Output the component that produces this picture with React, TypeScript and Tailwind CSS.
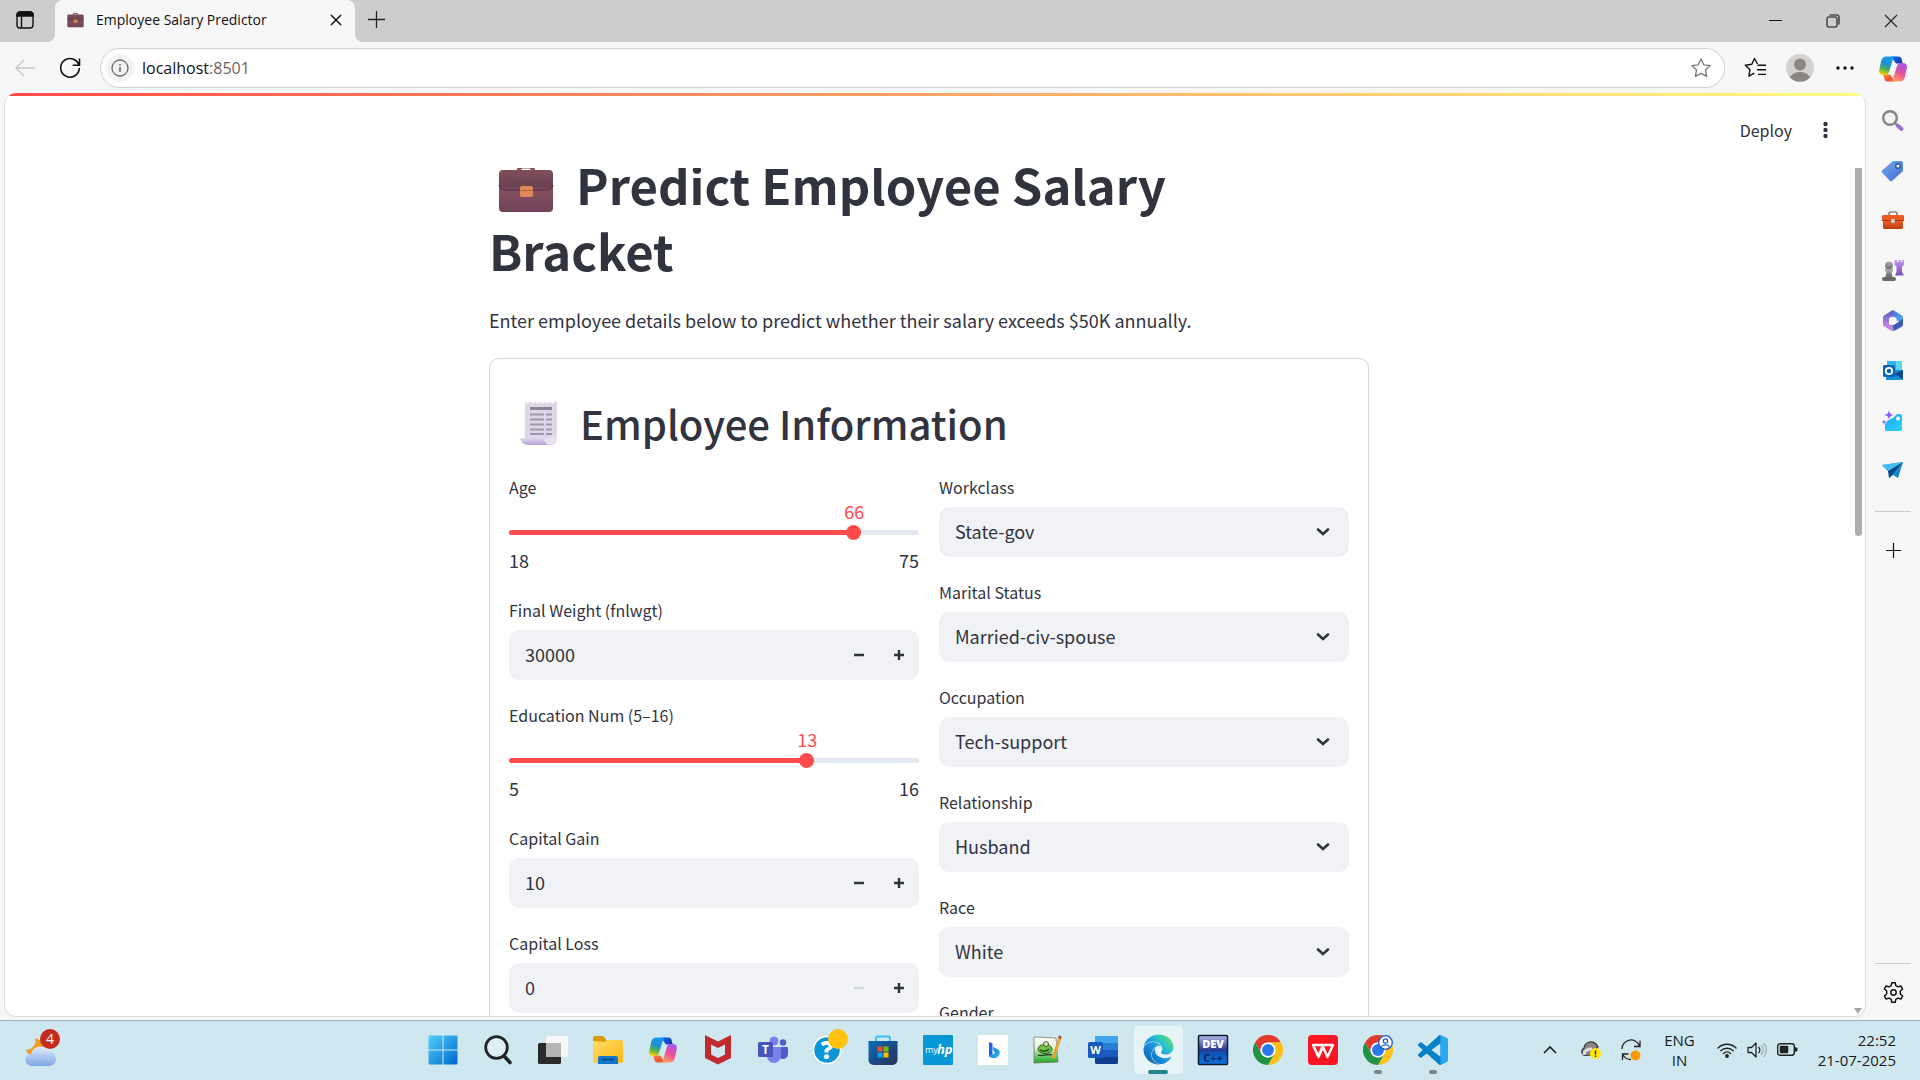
import { useState, type ReactNode } from 'react';
import { FaEdge } from 'react-icons/fa';

const ui = "font-['Open_Sans','Noto_Sans',sans-serif]";

/* ---------- colour icons ---------- */

function Gradients() {
  return (
    <svg width="0" height="0" className="absolute" aria-hidden="true">
      <defs>
        <linearGradient id="cpA" x1="0.6" y1="0" x2="0.3" y2="1">
          <stop offset="0" stopColor="#1b9cf0" />
          <stop offset="0.4" stopColor="#1a8fd8" />
          <stop offset="0.7" stopColor="#4fb057" />
          <stop offset="1" stopColor="#ffd000" />
        </linearGradient>
        <linearGradient id="cpB" x1="0.7" y1="0" x2="0.3" y2="1">
          <stop offset="0" stopColor="#a855e8" />
          <stop offset="0.5" stopColor="#ea4f9a" />
          <stop offset="1" stopColor="#ffa45c" />
        </linearGradient>
        <linearGradient id="cpC" x1="0" y1="0" x2="1" y2="1">
          <stop offset="0" stopColor="#0b6fe0" />
          <stop offset="1" stopColor="#1a2fae" />
        </linearGradient>
        <linearGradient id="cpD" x1="0" y1="0" x2="1" y2="1">
          <stop offset="0" stopColor="#ff7a3d" />
          <stop offset="1" stopColor="#e2433a" />
        </linearGradient>
        <linearGradient id="win" x1="0" y1="0" x2="1" y2="1">
          <stop offset="0" stopColor="#4fd0ff" />
          <stop offset="1" stopColor="#0067c9" />
        </linearGradient>
        <linearGradient id="case" x1="0" y1="0" x2="0" y2="1">
          <stop offset="0" stopColor="#80505a" />
          <stop offset="0.4" stopColor="#6a4250" />
          <stop offset="0.45" stopColor="#85505f" />
          <stop offset="1" stopColor="#70445a" />
        </linearGradient>
        <linearGradient id="edge" x1="0" y1="1" x2="1" y2="0.1">
          <stop offset="0" stopColor="#0b55a8" />
          <stop offset="0.45" stopColor="#1a8fdc" />
          <stop offset="0.7" stopColor="#2cc3cf" />
          <stop offset="1" stopColor="#6be04e" />
        </linearGradient>
        <linearGradient id="folder" x1="0" y1="0" x2="1" y2="1">
          <stop offset="0" stopColor="#ffdc6b" />
          <stop offset="1" stopColor="#fbb60f" />
        </linearGradient>
        <linearGradient id="store" x1="0" y1="0" x2="1" y2="1">
          <stop offset="0" stopColor="#0f6cb8" />
          <stop offset="1" stopColor="#263057" />
        </linearGradient>
        <linearGradient id="cloud" x1="0" y1="0" x2="0" y2="1">
          <stop offset="0" stopColor="#dfeafc" />
          <stop offset="1" stopColor="#7ea6e6" />
        </linearGradient>
        <linearGradient id="tag" x1="0" y1="0" x2="1" y2="1">
          <stop offset="0" stopColor="#6fa8f3" />
          <stop offset="1" stopColor="#426fcf" />
        </linearGradient>
        <linearGradient id="tool" x1="0" y1="0" x2="0" y2="1">
          <stop offset="0" stopColor="#f0692f" />
          <stop offset="1" stopColor="#bf3a0e" />
        </linearGradient>
        <linearGradient id="pawn" x1="0" y1="0" x2="0" y2="1">
          <stop offset="0" stopColor="#b0b0b0" />
          <stop offset="1" stopColor="#666" />
        </linearGradient>
        <linearGradient id="rook" x1="0" y1="0" x2="0" y2="1">
          <stop offset="0" stopColor="#c49af0" />
          <stop offset="1" stopColor="#7a4cb8" />
        </linearGradient>
        <linearGradient id="officeA" x1="0" y1="0" x2="1" y2="1">
          <stop offset="0" stopColor="#3f6fd0" />
          <stop offset="1" stopColor="#58b4f4" />
        </linearGradient>
        <linearGradient id="officeB" x1="0" y1="0" x2="0" y2="1">
          <stop offset="0" stopColor="#5b5fc7" />
          <stop offset="1" stopColor="#c58be0" />
        </linearGradient>
        <linearGradient id="plane" x1="0" y1="0" x2="1" y2="1">
          <stop offset="0" stopColor="#2aa8e8" />
          <stop offset="1" stopColor="#0f78c8" />
        </linearGradient>
        <linearGradient id="sky" x1="0" y1="0" x2="1" y2="1">
          <stop offset="0" stopColor="#17a8f5" />
          <stop offset="1" stopColor="#2fd2ff" />
        </linearGradient>
        <linearGradient id="bing" x1="0" y1="0" x2="1" y2="1">
          <stop offset="0" stopColor="#1e62e8" />
          <stop offset="1" stopColor="#28c8e8" />
        </linearGradient>
        <linearGradient id="paper" x1="0" y1="0" x2="0" y2="1">
          <stop offset="0" stopColor="#ffffff" />
          <stop offset="0.4" stopColor="#e3f3dc" />
          <stop offset="1" stopColor="#19a51c" />
        </linearGradient>
        <linearGradient id="dev" x1="0" y1="0" x2="0" y2="1">
          <stop offset="0" stopColor="#b4b8e4" />
          <stop offset="0.5" stopColor="#2a3796" />
          <stop offset="0.6" stopColor="#0c55b8" />
          <stop offset="1" stopColor="#1373e0" />
        </linearGradient>
        <linearGradient id="scroll" x1="0" y1="0" x2="0" y2="1">
          <stop offset="0" stopColor="#e2daec" />
          <stop offset="1" stopColor="#b79fd6" />
        </linearGradient>
      </defs>
    </svg>
  );
}

function Briefcase({ className }: { className: string }) {
  return (
    <svg viewBox="0 0 56 50" className={className} aria-hidden="true">
      <path d="M19 9V7a5 5 0 0 1 5-5h8a5 5 0 0 1 5 5v2h-4V7.500a2 2 0 0 0-2-2h-6a2 2 0 0 0-2 2V9z" fill="#8a5549" />
      <rect x="1" y="7" width="54" height="42" rx="4" fill="url(#case)" />
      <path d="M1 22c2 5 4 5 8 5h38c4 0 6 0 8-5" fill="none" stroke="#5e3355" strokeWidth="1.400" />
      <rect x="22" y="23" width="13" height="11" rx="2" fill="#e08a5c" />
      <path d="M22 27.500h13" stroke="#b9603f" />
    </svg>
  );
}

function Receipt({ className }: { className: string }) {
  return (
    <svg viewBox="0 0 38 46" className={className} aria-hidden="true">
      <path d="M5 2l2.500 1.500L10 2l2.500 1.500L15 2l2.500 1.500L20 2l2.500 1.500L25 2l2.500 1.500L30 2l2.500 1.500L35 2l2-1v38a6 6 0 0 1-6 6H8l-3-8z" fill="#ddd6e6" />
      <path d="M0 38h24a7 7 0 0 0 7 7H8a8 8 0 0 1-8-7z" fill="url(#scroll)" />
      <path d="M24 38c4 2 7-1 13-3v4a6 6 0 0 1-6 6 7 7 0 0 1-7-7z" fill="#e8e2f0" />
      <path d="M10 8.500h22" stroke="#8c8396" strokeWidth="3" />
      <path d="M10 14.500h14M26 14.500h6M10 19.500h14M26 19.500h6M10 24.500h14M26 24.500h6M10 29.500h14M26 29.500h6M10 34h14M26 34h6" stroke="#a097ab" strokeWidth="1.800" />
    </svg>
  );
}

function Copilot() {
  return (
    <svg viewBox="0 0 28 26" className="h-7 w-7" aria-hidden="true">
      <path d="M12 .5h7.500c2 0 2.700 1.200 3.200 3l1 4H17z" fill="url(#cpC)" />
      <path d="M16 25.500H8.500c-2 0-2.700-1.200-3.200-3l-1-4H11z" fill="url(#cpD)" />
      <path d="M7.500.5H17c-2 0-2.700 1.500-3.300 3.500l-3.400 11c-.7 2.400-1.800 4-4.300 4H4c-3 0-4.500-2.300-3.700-5.500l2-9C3 1.800 4.700.5 7.500.5z" fill="url(#cpA)" />
      <path d="M20.500 25.500H11c2 0 2.700-1.500 3.300-3.500l3.400-11c.7-2.400 1.800-4 4.300-4h2c3 0 4.500 2.300 3.700 5.500l-2 9c-.7 2.700-2.400 4-5.200 4z" fill="url(#cpB)" />
    </svg>
  );
}

function Chrome() {
  return (
    <svg viewBox="0 0 48 48" className="h-[30px] w-[30px]" aria-hidden="true">
      <path d="M24 12h20.800A24 24 0 0 0 3.200 12l10.400 18A12 12 0 0 1 24 12z" fill="#e33b2e" />
      <path d="M44.800 12A24 24 0 0 1 24 48l10.400-18A12 12 0 0 0 24 12z" fill="#fbc116" />
      <path d="M3.200 12A24 24 0 0 0 24 48l10.400-18a12 12 0 0 1-20.800 0z" fill="#229342" />
      <circle cx="24" cy="24" r="12" fill="#fff" />
      <circle cx="24" cy="24" r="9.500" fill="#2a78f0" />
    </svg>
  );
}

function Box({ children }: { children: ReactNode }) {
  return (
    <svg viewBox="0 0 30 30" className="h-[30px] w-[30px] overflow-visible" aria-hidden="true">
      {children}
    </svg>
  );
}

/* ---------- browser chrome ---------- */

function TitleBar() {
  return (
    <header className="flex h-[42px] bg-[#f7f7f7]">
      <div className="flex w-[55px] items-center rounded-br-lg bg-[#cdcdcd] pb-0.5 pl-4">
        <button aria-label="Tab actions">
          <svg width="18" height="18" viewBox="0 0 18 18" fill="none" stroke="#111" strokeWidth="1.400">
            <rect x="1" y="1" width="16" height="16" rx="3" />
            <path d="M1 5V4a3 3 0 0 1 3-3h10a3 3 0 0 1 3 3v1z" fill="#111" />
            <path d="M5.500 5v12" />
          </svg>
        </button>
      </div>
      <div className="w-[300px] bg-[linear-gradient(#cdcdcd_50%,#f7f7f7_50%)]">
        <div className="flex h-full items-center rounded-t-lg bg-[#f7f7f7] pr-3 pb-0.5 pl-3">
          <Briefcase className="h-4 w-[17px]" />
          <span className="ml-3 text-sm text-[#111]">Employee Salary Predictor</span>
          <button aria-label="Close tab" className="ml-auto">
            <svg width="14" height="14" viewBox="0 0 14 14" stroke="#111" strokeWidth="1.500">
              <path d="M2 2l10 10M12 2L2 12" />
            </svg>
          </button>
        </div>
      </div>
      <div className="flex flex-1 justify-between rounded-bl-lg bg-[#cdcdcd]">
        <button aria-label="New tab" className="pb-1 pl-3">
          <svg width="19" height="19" viewBox="0 0 19 19" stroke="#222" strokeWidth="1.300">
            <path d="M9.500 1v17M1 9.500h17" />
          </svg>
        </button>
        <div className="flex">
          <button aria-label="Minimise" className="flex w-[58px] items-center justify-center">
            <svg width="14" height="14" stroke="#111"><path d="M1 6.500h13" /></svg>
          </button>
          <button aria-label="Restore" className="flex w-[58px] items-center justify-center">
            <svg width="14" height="14" viewBox="0 0 14 14" fill="none" stroke="#111" strokeWidth="1.100">
              <rect x="1" y="3" width="10" height="10" rx="1.500" />
              <path d="M3.500 1H11a2 2 0 0 1 2 2v7.500" />
            </svg>
          </button>
          <button aria-label="Close" className="flex w-[58px] items-center justify-center">
            <svg width="14" height="14" viewBox="0 0 14 14" stroke="#222" strokeWidth="1.100">
              <path d="M1 1l12 12M13 1L1 13" />
            </svg>
          </button>
        </div>
      </div>
    </header>
  );
}

function Toolbar() {
  return (
    <div className="flex h-[51px] items-center">
      <button aria-label="Back" className="ml-[15px]">
        <svg width="20" height="18" viewBox="0 0 20 18" fill="none" stroke="#c6c6c6" strokeWidth="1.300">
          <path d="M20 9H1M9 1L1 9l8 8" />
        </svg>
      </button>
      <button aria-label="Refresh" className="ml-6">
        <svg width="22" height="22" viewBox="0 0 22 22" fill="none" stroke="#111" strokeWidth="1.600">
          <path d="M20 8.500A9.300 9.300 0 1 0 20.300 11M20.500 1.500v6.800h-6.800" />
        </svg>
      </button>
      <div className="ml-[19px] flex h-10 flex-1 items-center rounded-full border border-[#d0d0d0] bg-white pr-3 pl-[5px]">
        <button aria-label="Site information" className="flex h-7 w-7 items-center justify-center rounded-full bg-[#f3f3f3]">
          <svg width="18" height="18" viewBox="0 0 18 18" fill="none" stroke="#6b6b6b" strokeWidth="1.300">
            <circle cx="9" cy="9" r="8" />
            <path d="M9 8v5M9 5v1.500" strokeWidth="1.600" />
          </svg>
        </button>
        <span className="ml-2 flex-1 text-base text-[#111]">
          localhost<span className="text-[#666]">:8501</span>
        </span>
        <button aria-label="Add to favourites">
          <svg width="22" height="22" viewBox="0 0 24 24" fill="none" stroke="#777" strokeWidth="1.400" strokeLinejoin="round">
            <path d="M12 2.200l3 6.300 6.900.9-5 4.800 1.200 6.900-6.100-3.300-6.100 3.300 1.200-6.900-5-4.800 6.900-.9z" />
          </svg>
        </button>
      </div>
      <button aria-label="Favourites" className="ml-[19px]">
        <svg width="22" height="22" viewBox="0 0 22 22" fill="none" stroke="#111" strokeWidth="1.400" strokeLinejoin="round">
          <path d="M13.500 7L10.500 1.500 7.800 7.300l-6.500.9 4.700 4.500-1.100 6.500 5.400-3" />
          <path d="M13.500 8.200H22M13 12.800h9M14 17.400h8" />
        </svg>
      </button>
      <button aria-label="Profile" className="ml-5">
        <svg width="28" height="28" viewBox="0 0 28 28">
          <circle cx="14" cy="14" r="14" fill="#d4d2cf" />
          <circle cx="14" cy="10.500" r="6" fill="#8a8683" />
          <path d="M4 23.500c2-4 6-5.500 10-5.500s8 1.500 10 5.500A14 14 0 0 1 4 23.500z" fill="#8a8683" />
        </svg>
      </button>
      <button aria-label="Settings and more" className="mr-3 ml-[22px]">
        <svg width="18" height="4" viewBox="0 0 18 4" fill="#111">
          <circle cx="2" cy="2" r="1.700" /><circle cx="9" cy="2" r="1.700" /><circle cx="16" cy="2" r="1.700" />
        </svg>
      </button>
    </div>
  );
}

const sideIcons: [string, ReactNode][] = [
  ['Search', <><circle cx="8" cy="8" r="6.800" fill="#f0f4f5" stroke="#858585" strokeWidth="2.400" /><path d="M12.500 12.500l2.500 2.500" stroke="#858585" strokeWidth="2" /><path d="M15.500 15.500l4 3.500" stroke="#9a6fd0" strokeWidth="4" strokeLinecap="round" /></>],
  ['Shopping', <><path d="M11 1h8a2 2 0 0 1 2 2v8l-10.500 9.500a2 2 0 0 1-3 0L.5 13a2 2 0 0 1 0-3z" fill="url(#tag)" /><circle cx="16" cy="6" r="2.200" fill="#fff" stroke="#2f529c" strokeWidth="1.400" /></>],
  ['Tools', <><path d="M7 5V3.500A1.500 1.500 0 0 1 8.500 2h5A1.500 1.500 0 0 1 15 3.500V5" fill="none" stroke="#888" strokeWidth="1.700" /><rect x="1" y="9" width="20" height="10" rx="1.500" fill="url(#tool)" /><rect x="0" y="5" width="22" height="6" rx="1.200" fill="#ea5c22" /><path d="M0 10.500h22" stroke="#a83410" /><circle cx="11" cy="11" r="2.200" fill="#ccc" /></>],
  ['Games', <><circle cx="7" cy="5.500" r="4" fill="url(#pawn)" /><path d="M3 9h8v2.500H9.500L10.500 17h-7l1-5.500H3z" fill="url(#pawn)" /><rect x="0" y="17" width="14" height="4" rx="2" fill="#6a6a6a" /><path d="M12.500 0H15v2h1.500V0h2.200v2h1.500V0H22v5l-2 1.500V12l2 3.500h-9l1.500-3.500V6.500l-2-1.500z" fill="url(#rook)" /></>],
  ['Microsoft 365', <><path d="M9.500.8a2.500 2.500 0 0 1 2.700 0l7.500 4.400A2.500 2.500 0 0 1 21 7.400V13l-6-2.500L8 7z" fill="url(#officeA)" /><path d="M10 .6L2.300 5.200A2.500 2.500 0 0 0 1 7.400v7.200a2.500 2.500 0 0 0 1.300 2.200L7 15V8.500l5-3z" fill="url(#officeB)" /><path d="M1.500 16l7.800 4.800a2.500 2.500 0 0 0 2.600 0l3-1.800-4-4-6-1z" fill="#bf86dc" /><path d="M21 8.500v6a2.500 2.500 0 0 1-1.300 2.200L12 21l-1.500-5.500L15 13z" fill="#3d5cb8" /><circle cx="11" cy="10.500" r="3.800" fill="#f7f7f7" /></>],
  ['Outlook', <><rect x="5" y="1" width="15" height="9" fill="#31b6ea" /><path d="M14 1h6v9h-6z" fill="#5bd6fa" /><path d="M4 10h17v10H4z" fill="#168fd4" /><path d="M21 10v9l-9-5z" fill="#0b4d8a" /><rect x="1" y="5" width="12" height="12" rx="1.500" fill="#0b66b8" /><circle cx="7" cy="11" r="3.200" fill="none" stroke="#fff" strokeWidth="1.800" /></>],
  ['Image creator', <><path d="M3 12l8-4 4-4h3a2 2 0 0 1 2 2v13a2 2 0 0 1-2 2H5a2 2 0 0 1-2-2z" fill="url(#sky)" /><circle cx="16" cy="8.500" r="2" fill="#fff" /><path d="M7 0l1.500 3.500L12 5 8.500 6.500 7 10 5.500 6.500 2 5l3.500-1.500zM2 9l.9 2.100 2.100.9-2.100.9L2 15l-.9-2.100L-1 12l2.100-.9z" fill="#8a5cf0" stroke="#f7f7f7" strokeWidth=".6" /></>],
  ['Drop', <><path d="M0 5l21-3-5 16-5-3-4 3v-6z" fill="url(#plane)" /><path d="M7 18l-1-7L21 2l-10 12z" fill="#0b4a80" /><path d="M0 5l21-3L6 11z" fill="#46bdf0" /></>],
];

function EdgeSidebar() {
  return (
    <nav aria-label="Sidebar" className="flex w-[54px] flex-col items-center">
      <button aria-label="Copilot" className="flex h-[54px] items-center"><Copilot /></button>
      {sideIcons.map(([name, art]) => (
        <button key={name} aria-label={name} className="flex h-[50px] items-center">
          <svg width="22" height="22" viewBox="0 0 22 22" className="overflow-visible">{art}</svg>
        </button>
      ))}
      <div className="mt-[15px] h-px w-9 bg-[#ccc]" />
      <button aria-label="Customise" className="mt-[31px]">
        <svg width="15" height="15" viewBox="0 0 15 15" stroke="#111" strokeWidth="1.200"><path d="M7.500 0v15M0 7.500h15" /></svg>
      </button>
      <div className="mt-auto h-px w-9 bg-[#ccc]" />
      <button aria-label="Settings" className="mt-[17px] mb-4">
        <svg width="23" height="23" viewBox="0 0 24 24" fill="none" stroke="#111" strokeWidth="1.500" strokeLinejoin="round">
          <circle cx="12" cy="12" r="2.800" />
          <path d="M10.200 1.800h3.600l.6 3.100 2.300 1.300 3-1 1.800 3.100-2.400 2.100v3.200l2.400 2.100-1.800 3.100-3-1-2.300 1.300-.6 3.100h-3.600l-.6-3.100-2.300-1.300-3 1-1.800-3.100 2.400-2.100v-3.200L2.500 8.300l1.800-3.100 3 1 2.300-1.300z" />
        </svg>
      </button>
    </nav>
  );
}

/* ---------- form widgets ---------- */

const labelClass = 'mb-[5px] flex h-[30px] items-center text-base';

function Slider({ id, label, min, max, initial }: { id: string; label: string; min: number; max: number; initial: number }) {
  const [value, setValue] = useState(initial);
  const pct = ((value - min) / (max - min)) * 100;
  return (
    <div>
      <label htmlFor={id} className={labelClass}>{label}</label>
      <div className="pt-[23px]">
        <div className="relative h-[5px] rounded-full bg-[#e3e8f0]">
          <div className="h-full rounded-full bg-[#ff4b4b]" style={{ width: `${pct}%` }} />
          <output htmlFor={id} className="absolute bottom-3 -translate-x-1/2 text-lg leading-6 text-[#ff4b4b]" style={{ left: `${pct}%` }}>
            {value}
          </output>
          <input
            id={id}
            type="range"
            min={min}
            max={max}
            value={value}
            onChange={(e) => setValue(Number(e.target.value))}
            className="absolute -top-[5px] -left-[7px] h-[15px] w-[calc(100%+14px)] cursor-pointer appearance-none bg-transparent [&::-webkit-slider-thumb]:h-[15px] [&::-webkit-slider-thumb]:w-[15px] [&::-webkit-slider-thumb]:appearance-none [&::-webkit-slider-thumb]:rounded-full [&::-webkit-slider-thumb]:bg-[#ff4b4b]"
          />
        </div>
        <div className="flex justify-between pt-3 pb-0.5 text-lg leading-[26px]">
          <span>{min}</span>
          <span>{max}</span>
        </div>
      </div>
    </div>
  );
}

function NumberField({ id, label, initial }: { id: string; label: string; initial: number }) {
  const [value, setValue] = useState(initial);
  return (
    <div>
      <label htmlFor={id} className={labelClass}>{label}</label>
      <div className="flex h-[50px] overflow-hidden rounded-[10px] bg-[#f0f2f6]">
        <input
          id={id}
          type="text"
          inputMode="numeric"
          value={value}
          onChange={(e) => setValue(Number(e.target.value) || 0)}
          className="min-w-0 flex-1 bg-transparent pb-0.5 pl-4 text-lg outline-none"
        />
        <button type="button" aria-label={`Decrease ${label}`} disabled={value <= 0} onClick={() => setValue(value - 1)} className="flex w-10 items-center justify-center disabled:text-[#d5d8e2]">
          <svg width="10" height="10" stroke="currentColor" strokeWidth="2.500"><path d="M0 5h10" /></svg>
        </button>
        <button type="button" aria-label={`Increase ${label}`} onClick={() => setValue(value + 1)} className="flex w-10 items-center justify-center">
          <svg width="10" height="10" stroke="currentColor" strokeWidth="2.500"><path d="M0 5h10M5 0v10" /></svg>
        </button>
      </div>
    </div>
  );
}

function SelectField({ id, label, value }: { id: string; label: string; value: string }) {
  return (
    <div>
      <label htmlFor={id} className={labelClass}>{label}</label>
      <div className="relative">
        <select id={id} defaultValue={value} className="h-[50px] w-full appearance-none rounded-[10px] bg-[#f0f2f6] px-4 pb-0.5 text-lg outline-none">
          <option>{value}</option>
        </select>
        <svg width="14" height="10" viewBox="0 0 14 10" fill="none" stroke="currentColor" strokeWidth="2.600" strokeLinecap="round" className="pointer-events-none absolute top-5 right-[19px]">
          <path d="M2 2.500l5 4.500 5-4.500" />
        </svg>
      </div>
    </div>
  );
}

function StreamlitPage() {
  return (
    <main className="mb-[3px] ml-1 flex min-h-0 flex-1 flex-col overflow-hidden rounded-xl border border-t-0 border-[#dcdcdc] bg-white font-['Noto_Sans_CJK_SC',sans-serif] text-[#31333f]">
      <div className="h-[3px] shrink-0 bg-[linear-gradient(90deg,#ff4b4b,#fffd80)]" />
      <div className="flex h-[72px] shrink-0 items-center justify-end pr-[37px] pb-1">
        <button className="text-base">Deploy</button>
        <button aria-label="Main menu" className="ml-[31px]">
          <svg width="5" height="18" viewBox="0 0 5 18" fill="currentColor">
            <circle cx="2.500" cy="3" r="2.200" /><circle cx="2.500" cy="9" r="2.200" /><circle cx="2.500" cy="15" r="2.200" />
          </svg>
        </button>
      </div>
      <div className="flex min-h-0 flex-1 items-start overflow-hidden">
        <div className="mx-auto -mt-[17px] w-[880px]">
          <h1 className="pr-10 text-[49px] leading-[66px] font-bold">
            <Briefcase className="mr-[22px] ml-[9px] inline-block h-[50px] w-14 align-[-8px]" />
            Predict Employee Salary Bracket
          </h1>
          <p className="mt-[21px] text-lg leading-8">
            Enter employee details below to predict whether their salary exceeds $50K annually.
          </p>
          <form className="mt-[22px] rounded-[10px] border border-[#d6d6d9] px-[19px] pt-[18px] pb-5" onSubmit={(e) => e.preventDefault()}>
            <h2 className="mb-px flex h-[94px] items-center pb-0.5 text-[40px] font-medium">
              <Receipt className="mr-[22px] ml-[11px] h-[46px] w-[38px]" />
              Employee Information
            </h2>
            <div className="grid grid-cols-2 items-start gap-5">
              <div className="flex flex-col gap-5">
                <Slider id="age" label="Age" min={18} max={75} initial={66} />
                <NumberField id="fnlwgt" label="Final Weight (fnlwgt)" initial={30000} />
                <Slider id="edu" label="Education Num (5–16)" min={5} max={16} initial={13} />
                <NumberField id="gain" label="Capital Gain" initial={10} />
                <NumberField id="loss" label="Capital Loss" initial={0} />
              </div>
              <div className="flex flex-col gap-5">
                <SelectField id="workclass" label="Workclass" value="State-gov" />
                <SelectField id="marital" label="Marital Status" value="Married-civ-spouse" />
                <SelectField id="occupation" label="Occupation" value="Tech-support" />
                <SelectField id="relationship" label="Relationship" value="Husband" />
                <SelectField id="race" label="Race" value="White" />
                <SelectField id="gender" label="Gender" value="Male" />
              </div>
            </div>
          </form>
        </div>
        <div className="flex h-full w-3 flex-col items-end justify-between pr-[3px] pb-0.5">
          <div className="h-[368px] w-[7px] rounded-b bg-[#adadb1]" />
          <svg width="8" height="6" fill="#a5a5a9"><path d="M0 0h8L4 6z" /></svg>
        </div>
      </div>
    </main>
  );
}

/* ---------- taskbar ---------- */

const apps: { name: string; art: ReactNode; state?: 'active' | 'open' }[] = [
  { name: 'Start', art: <Box><path d="M.5 1.500a1 1 0 0 1 1-1h13v14H.5zM15.500.5h13a1 1 0 0 1 1 1v13h-14zM.5 15.500h14v14h-13a1 1 0 0 1-1-1zM15.500 15.500h14v13a1 1 0 0 1-1 1h-13z" fill="url(#win)" /></Box> },
  { name: 'Search', art: <Box><circle cx="13.500" cy="12.500" r="10.800" fill="#dfeef2" stroke="#1f2426" strokeWidth="2.800" /><path d="M21 21l6 6.500" stroke="#1f2426" strokeWidth="3.600" strokeLinecap="round" /></Box> },
  { name: 'Task view', art: <Box><rect x="0" y="8" width="23" height="21" rx="1.500" fill="#2a2a2a" /><rect x="8" y="1" width="22" height="21" rx="1.500" fill="#f7f7f7" /><path d="M8 8h15v14H9.500A1.500 1.500 0 0 1 8 20.500z" fill="#b5b5b5" /></Box> },
  { name: 'File Explorer', art: <Box><path d="M0 3a2 2 0 0 1 2-2h8l3 3v5H0z" fill="#dd9c06" /><path d="M0 6l12 1 2-2h14a2 2 0 0 1 2 2v19a2 2 0 0 1-2 2H2a2 2 0 0 1-2-2z" fill="url(#folder)" /><path d="M5 29v-6a2 2 0 0 1 2-2h16a2 2 0 0 1 2 2v6z" fill="#0f78c8" /><path d="M9 24.500h12" stroke="#0b3f78" strokeWidth="1.500" /></Box> },
  { name: 'Copilot', art: <Copilot /> },
  { name: 'McAfee', art: <Box><path d="M2 0l13 6.500L28 0v23l-13 6.500L2 23zM8 9.500v10l7 3.500 7-3.500v-10l-7 3.500z" fill="#c02b30" /></Box> },
  { name: 'Teams', art: <Box><circle cx="16" cy="6" r="4.500" fill="#7b83eb" /><circle cx="25" cy="7.500" r="3.200" fill="#5059c9" /><path d="M20 12h9a1 1 0 0 1 1 1v6a5 5 0 0 1-8 4z" fill="#5059c9" /><path d="M9 12h14v9a7 7 0 0 1-14 0z" fill="#7b83eb" /><rect x="0" y="7" width="15" height="15" rx="1.500" fill="#4b53bc" /><text x="7.500" y="18.500" fontSize="12" fontWeight="700" fill="#fff" textAnchor="middle">T</text></Box> },
  { name: 'HP Support', art: <Box><circle cx="14" cy="15" r="13.500" fill="#0a96d8" stroke="#fff" strokeWidth="1.500" /><text x="14" y="24" fontSize="25" fontWeight="800" fill="#fff" textAnchor="middle">?</text><circle cx="25" cy="4" r="10" fill="#ffc20e" /></Box> },
  { name: 'Microsoft Store', art: <Box><path d="M8 7V3a1.500 1.500 0 0 1 1.500-1.500h11A1.500 1.500 0 0 1 22 3v4" fill="none" stroke="#35c1f5" strokeWidth="1.800" /><path d="M.5 6h29v19a5 5 0 0 1-5 5h-19a5 5 0 0 1-5-5z" fill="url(#store)" /><path d="M9.500 11.500h5v5h-5z" fill="#f25022" /><path d="M15.500 11.500h5v5h-5z" fill="#7fba00" /><path d="M9.500 17.500h5v5h-5z" fill="#00a4ef" /><path d="M15.500 17.500h5v5h-5z" fill="#ffb900" /></Box> },
  { name: 'myHP', art: <Box><rect width="30" height="30" rx="1" fill="#0796d6" /><text x="2" y="18" fontSize="9" fill="#fff">my</text><text x="14" y="19" fontSize="13" fontStyle="italic" fontWeight="700" fill="#fff">hp</text></Box> },
  { name: 'Bing', art: <Box><rect width="30" height="30" fill="#fff" /><path d="M11 7l3.500 1.500v11L11 22z" fill="#1e62e8" /><path d="M15 12l6 3c2 3 0 7-3.500 8-3 .5-5.500-.5-6.500-1.500l6-3.500-1.500-2.500z" fill="url(#bing)" /></Box> },
  { name: 'Notepad++', art: <Box><path d="M1 2l22 1 2 24-24 1z" fill="url(#paper)" stroke="#777" strokeWidth=".8" /><ellipse cx="12" cy="14" rx="7" ry="4.500" fill="#6cc544" stroke="#2b5a1c" /><circle cx="13" cy="9" r="2.500" fill="#c8e8b0" stroke="#333" strokeWidth=".8" /><path d="M7 15c3 2 7 1 9-1M5 20c4 2 9-2 14 0" stroke="#1e3c16" fill="none" strokeWidth="1.300" /><path d="M20 23l7-20" stroke="#eba42e" strokeWidth="3" /><path d="M26.500 3.500l.8-2.500" stroke="#a34a3a" strokeWidth="3" /></Box> },
  { name: 'Word', art: <Box><rect x="7" y="1" width="23" height="28" rx="1.500" fill="#103f91" /><path d="M7 2.500A1.500 1.500 0 0 1 8.500 1h20A1.500 1.500 0 0 1 30 2.500V8H7z" fill="#41a5ee" /><path d="M7 8h23v7H7z" fill="#2b7cd3" /><path d="M7 15h23v7H7z" fill="#185abd" /><rect x="0" y="7" width="15" height="16" rx="1.500" fill="#185abd" /><text x="7.500" y="19" fontSize="11" fontWeight="700" fill="#fff" textAnchor="middle">W</text></Box> },
  { name: 'Edge', art: <FaEdge size={31} fill="url(#edge)" />, state: 'active' },
  { name: 'Dev-C++', art: <Box><rect x=".5" y=".5" width="29" height="29" rx="1" fill="url(#dev)" stroke="#111a33" strokeWidth="1.500" /><text x="15" y="12.500" fontSize="11" fontWeight="800" fill="#fff" textAnchor="middle">DEV</text><text x="15" y="27" fontSize="11" fontWeight="700" fill="#0a2560" textAnchor="middle">C++</text></Box> },
  { name: 'Chrome', art: <Chrome /> },
  { name: 'WPS Office', art: <Box><rect width="30" height="30" rx="4" fill="#fb1421" /><path d="M5 10h10l-4.500 11zM5 10l5.500 12L15 12l4.500 10L25 10h-9" fill="none" stroke="#fff" strokeWidth="2.400" strokeLinejoin="round" /></Box> },
  { name: 'Chrome profile', art: <span className="relative block"><Chrome /><svg width="15" height="15" viewBox="0 0 15 15" className="absolute top-0 right-0"><circle cx="7.500" cy="7.500" r="6.800" fill="#fff" stroke="#1d58c8" strokeWidth="1.300" /><circle cx="7.500" cy="6" r="2.200" fill="none" stroke="#1d58c8" strokeWidth="1.200" /><path d="M3.500 11.500c2-2.200 6-2.200 8 0" fill="none" stroke="#1d58c8" strokeWidth="1.200" /></svg></span>, state: 'open' },
  { name: 'VS Code', art: <svg width="30" height="30" viewBox="0 0 24 24" aria-hidden="true"><path fill="#0a80c8" d="M23.150 2.587L18.210.21a1.494 1.494 0 0 0-1.705.29l-9.460 8.630-4.120-3.128a.999.999 0 0 0-1.276.057L.327 7.261A1 1 0 0 0 .326 8.740L3.899 12 .326 15.260a1 1 0 0 0 .001 1.479L1.650 17.940a.999.999 0 0 0 1.276.057l4.120-3.128 9.460 8.630a1.492 1.492 0 0 0 1.704.29l4.942-2.377A1.500 1.500 0 0 0 24 20.060V3.939a1.500 1.500 0 0 0-.850-1.352zm-5.146 14.861L10.826 12l7.178-5.448v10.896z" /><path fill="#2aa9f2" d="M18 .15l5.150 2.430A1.500 1.500 0 0 1 24 3.940v16.120a1.500 1.500 0 0 1-.85 1.360L18 23.850z" /></svg>, state: 'open' },
];

function Taskbar() {
  return (
    <footer className="flex h-[60px] shrink-0 items-center border-t border-[#9fb2b9] bg-[#cfe8ef] pb-0.5 text-[#1a1a1a]">
      <div className="flex-1 pl-6">
        <button aria-label="Weather, 4 notifications" className="relative block">
          <svg width="36" height="42" viewBox="0 0 36 42">
            <path d="M11 9c2 5-1 11-9 12 3 8 14 8 18 0l-2-9z" fill="#f29b26" />
            <path d="M8 37a6 6 0 0 1-1-12 9 9 0 0 1 17-2 7 7 0 0 1 2 14z" fill="url(#cloud)" />
          </svg>
          <span className="absolute top-0 left-4 flex h-5 w-5 items-center justify-center rounded-full bg-[#c42b1c] text-sm text-white">4</span>
        </button>
      </div>
      <div className="mr-11 flex">
        {apps.map(({ name, art, state }) => (
          <button key={name} aria-label={name} className={`relative mx-[3px] flex h-12 w-[49px] items-center justify-center rounded ${state === 'active' ? 'bg-[#e6f3f7]' : ''}`}>
            {art}
            {state === 'active' && <span className="absolute bottom-0 h-1 w-5 rounded-full bg-[#26848f]" />}
            {state === 'open' && <span className="absolute bottom-0 h-1 w-2 rounded-full bg-[#7b8588]" />}
          </button>
        ))}
      </div>
      <div className="flex flex-1 items-center justify-end pr-6">
        <button aria-label="Hidden icons">
          <svg width="14" height="8" viewBox="0 0 14 8" fill="none" stroke="#222" strokeWidth="1.700"><path d="M1 7l6-6 6 6" /></svg>
        </button>
        <button aria-label="OneDrive" className="ml-6">
          <svg width="20" height="18" viewBox="0 0 20 18">
            <path d="M4 14.500A4 4 0 0 1 3 7a7 7 0 0 1 12-4l2 3-7 8z" fill="#888" stroke="#333" strokeWidth="1.200" />
            <path d="M3 14c0-5 5-6 8-6" stroke="#ddd" strokeWidth="3" fill="none" />
            <circle cx="14.500" cy="12.500" r="5.500" fill="#ffe500" />
            <path d="M14.500 9.500v4M14.500 14.500v1.500" stroke="#222" strokeWidth="1.400" />
          </svg>
        </button>
        <button aria-label="Windows Update" className="ml-5">
          <svg width="20" height="22" viewBox="0 0 20 22" fill="none" stroke="#222" strokeWidth="1.300">
            <path d="M1 10A9 9 0 0 1 18.500 7M19 1.500v6h-6M10 20.500A9 9 0 0 1 2 16M1.500 21v-6h6" />
            <circle cx="14.500" cy="16.500" r="5" fill="#ff9800" stroke="none" />
          </svg>
        </button>
        <button className="ml-[23px] text-center text-[15px] leading-5">ENG<br />IN</button>
        <button aria-label="Network, volume and battery" className="ml-[22px] flex items-center gap-2.5">
          <svg width="20" height="16" viewBox="0 0 20 16" fill="none" stroke="#222" strokeWidth="1.400" strokeLinecap="round">
            <path d="M1 6a12.700 12.700 0 0 1 18 0M3.800 8.800a8.800 8.800 0 0 1 12.400 0M6.500 11.500a5 5 0 0 1 7 0" />
            <circle cx="10" cy="14" r="1.200" fill="#222" />
          </svg>
          <svg width="20" height="18" viewBox="0 0 20 18" fill="none" stroke="#222" strokeWidth="1.300" strokeLinejoin="round">
            <path d="M1 6.500v5h3.500L9 16V2L4.500 6.500z" /><path d="M11.500 6a4 4 0 0 1 0 6" />
            <path d="M14 4a7 7 0 0 1 0 10M16.500 2a10 10 0 0 1 0 14" stroke="#9fb0b5" />
          </svg>
          <svg width="21" height="13" viewBox="0 0 21 13">
            <rect x=".7" y=".7" width="16.600" height="11.600" rx="2.500" fill="none" stroke="#222" strokeWidth="1.400" />
            <rect x="2.800" y="2.800" width="8.500" height="7.400" rx="1" fill="#222" /><path d="M18 4l2.500 1v3L18 9z" fill="#222" />
          </svg>
        </button>
        <button className="ml-5 text-right text-[15px] leading-5">22:52<br />21-07-2025</button>
      </div>
    </footer>
  );
}

export default function App() {
  return (
    <div className={`flex h-screen flex-col overflow-hidden bg-[#f7f7f7] ${ui}`}>
      <Gradients />
      <TitleBar />
      <div className="flex min-h-0 flex-1">
        <div className="flex min-w-0 flex-1 flex-col">
          <Toolbar />
          <StreamlitPage />
        </div>
        <EdgeSidebar />
      </div>
      <Taskbar />
    </div>
  );
}
